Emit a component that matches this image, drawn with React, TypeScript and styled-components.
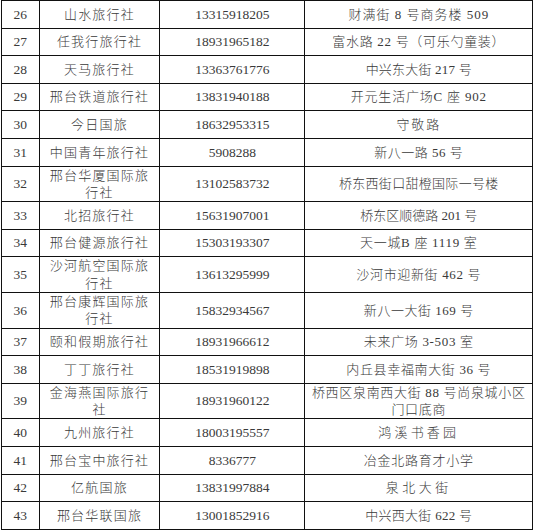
import React from "react";
import styled, { createGlobalStyle } from "styled-components";

const Global = createGlobalStyle`
  html, body { margin: 0; padding: 0; background: #ffffff; }
  #root { width: 535px; height: 530px; overflow: hidden; }
`;

type Row = {
  no: string;
  name: string[];
  phone: string;
  addr: string[];
  nameLs?: number;
  addrLs?: number;
};

const rows: Row[] = [
  { no: "26", name: ["山水旅行社"], phone: "13315918205", addr: ["财满街 8 号商务楼 509"], addrLs: 1 },
  { no: "27", name: ["任我行旅行社"], phone: "18931965182", addr: ["富水路 22 号（可乐勺童装）"], addrLs: 0.7 },
  { no: "28", name: ["天马旅行社"], phone: "13363761776", addr: ["中兴东大街 217 号"], addrLs: 0.2 },
  { no: "29", name: ["邢台铁道旅行社"], phone: "13831940188", addr: ["开元生活广场C 座 902"], addrLs: 0.8 },
  { no: "30", name: ["今日国旅"], phone: "18632953315", addr: ["守敬路"], addrLs: 1.85 },
  { no: "31", name: ["中国青年旅行社"], phone: "5908288", addr: ["新八一路 56 号"], addrLs: 0.5 },
  { no: "32", name: ["邢台华厦国际旅", "行社"], phone: "13102583732", addr: ["桥东西街口甜橙国际一号楼"], addrLs: 0.3 },
  { no: "33", name: ["北招旅行社"], phone: "15631907001", addr: ["桥东区顺德路 201 号"], addrLs: 0 },
  { no: "34", name: ["邢台健源旅行社"], phone: "15303193307", addr: ["天一城B 座 1119 室"], addrLs: 0.7 },
  { no: "35", name: ["沙河航空国际旅", "行社"], phone: "13613295999", addr: ["沙河市迎新街 462 号"], addrLs: 0.66 },
  { no: "36", name: ["邢台康辉国际旅", "行社"], phone: "15832934567", addr: ["新八一大街 169 号"], addrLs: 0.53 },
  { no: "37", name: ["颐和假期旅行社"], phone: "18931966612", addr: ["未来广场 3-503 室"], addrLs: 0.68 },
  { no: "38", name: ["丁丁旅行社"], phone: "18531919898", addr: ["内丘县幸福南大街 36 号"], addrLs: 0.65 },
  { no: "39", name: ["金海燕国际旅行", "社"], phone: "18931960122", addr: ["桥西区泉南西大街 88 号尚泉城小区", "门口底商"], addrLs: 0.68 },
  { no: "40", name: ["九州旅行社"], phone: "18003195557", addr: ["鸿溪书香园"], addrLs: 3.2 },
  { no: "41", name: ["邢台宝中旅行社"], phone: "8336777", addr: ["冶金北路育才小学"], addrLs: 0.76 },
  { no: "42", name: ["亿航国旅"], phone: "13831997884", addr: ["泉北大街"], addrLs: 3.5 },
  { no: "43", name: ["邢台华联国旅"], phone: "13001852916", addr: ["中兴西大街 622 号"], addrLs: 0.27 },
];

const Table = styled.div`
  display: grid;
  grid-template-columns: 36.7px 119.6px 144px 227px;
  gap: 1px;
  padding: 1px;
  margin-left: 1px;
  width: max-content;
  background: #111111;
`;

const Cell = styled.div<{ $num?: boolean; $ls?: number }>`
  background: #ffffff;
  min-height: 26.6px;
  display: flex;
  align-items: center;
  justify-content: center;
  text-align: center;
  padding: 0 3px;
  box-sizing: border-box;
  white-space: nowrap;
  color: #3a3a3a;
  font-family: "Liberation Serif", "Noto Sans CJK SC", serif;
  font-weight: 300;
  font-size: ${(p) => (p.$num ? "13.5px" : "13px")};
  line-height: 17.3px;
  letter-spacing: ${(p) => (p.$ls ?? 0)}px;
`;

const Lines: React.FC<{ lines: string[] }> = ({ lines }) => (
  <span>
    {lines.map((l, i) => (
      <React.Fragment key={i}>
        {i > 0 && <br />}
        {l}
      </React.Fragment>
    ))}
  </span>
);

export default function App() {
  return (
    <>
      <Global />
      <Table>
        {rows.map((r) => (
          <React.Fragment key={r.no}>
            <Cell $num>{r.no}</Cell>
            <Cell $ls={r.nameLs ?? 1.2}>
              <Lines lines={r.name} />
            </Cell>
            <Cell $num>{r.phone}</Cell>
            <Cell $ls={r.addrLs ?? 0.65}>
              <Lines lines={r.addr} />
            </Cell>
          </React.Fragment>
        ))}
      </Table>
    </>
  );
}
